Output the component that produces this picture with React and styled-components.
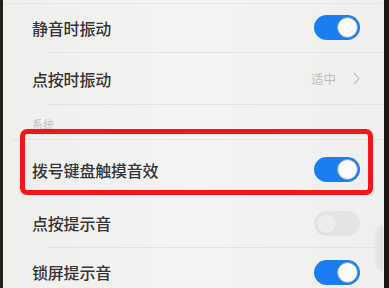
import React from 'react';
import styled, { createGlobalStyle } from 'styled-components';

const Global = createGlobalStyle`
  html, body {
    margin: 0;
    padding: 0;
    background: #1e1a17;
  }
  body {
    font-family: 'Noto Sans CJK SC', 'Noto Sans', sans-serif;
  }
`;

const Phone = styled.div`
  width: 389px;
  height: 288px;
  display: flex;
  overflow: hidden;
  background: #221d1a;
`;

const Bezel = styled.div`
  width: ${(p) => p.w}px;
  background: ${(p) => p.c};
`;

const Screen = styled.div`
  position: relative;
  flex: 1;
  background: linear-gradient(90deg, #efefee 0%, #f4f4f3 50%, #efefee 100%);
  padding-top: 3px;
`;

const TopLine = styled.div`
  position: absolute;
  left: 0;
  right: 0;
  top: 3px;
  height: 1px;
  background: #e6e6e5;
`;

const Row = styled.div`
  height: ${(p) => p.h}px;
  display: flex;
  align-items: center;
  justify-content: space-between;
  padding: 0 24px 0 29px;
`;

const Label = styled.span`
  font-size: 16px;
  font-weight: 500;
  color: #353535;
  letter-spacing: -0.2px;
`;

const Divider = styled.div`
  height: 1px;
  margin-left: ${(p) => (p.inset === undefined ? 44 : p.inset)}px;
  background: #e3e3e2;
`;

const Header = styled.div`
  height: 34px;
  display: flex;
  align-items: flex-end;
  padding: 0 0 7px 29px;
  box-sizing: border-box;
  font-size: 11px;
  color: #c2c2c2;
`;

const Toggle = styled.div`
  width: 46px;
  height: 25px;
  border-radius: 13px;
  background: ${(p) => (p.on ? '#1a7ef2' : '#e3e4e4')};
  display: flex;
  align-items: center;
  justify-content: ${(p) => (p.on ? 'flex-end' : 'flex-start')};
  padding: 0 2px;
  box-sizing: border-box;
`;

const Knob = styled.div`
  width: 21px;
  height: 21px;
  border-radius: 50%;
  box-sizing: border-box;
  background: ${(p) => (p.on ? '#fbfbfd' : '#eceded')};
  border: 1px solid ${(p) => (p.on ? '#8a9bb0' : '#dcdddd')};
`;

const Value = styled.div`
  display: flex;
  align-items: center;
  gap: 17px;
  font-size: 12.5px;
  color: #bdbdbd;
`;

const Highlight = styled.div`
  position: absolute;
  left: 17px;
  top: 129px;
  width: 353px;
  height: 66px;
  box-sizing: border-box;
  border: 5px solid #f6151b;
  border-radius: 7px;
`;

const EdgeBump = styled.div`
  position: absolute;
  right: 1px;
  top: 225px;
  width: 9px;
  height: 46px;
  border-radius: 10px 0 0 10px;
  background: linear-gradient(90deg, #ebebea, #dedede);
`;

const Switch = ({ on }) => (
  <Toggle on={on ? 1 : 0}>
    <Knob on={on ? 1 : 0} />
  </Toggle>
);

export default function App() {
  return (
    <>
      <Global />
      <Phone>
        <Bezel w={3} c="#241e1a" />
        <Screen>
          <TopLine />
          <Row h={49}>
            <Label>静音时振动</Label>
            <Switch on />
          </Row>
          <Divider />
          <Row h={51}>
            <Label>点按时振动</Label>
            <Value>
              适中
              <svg width="7" height="13" viewBox="0 0 7 13">
                <path d="M1 1l5 5.5L1 12" fill="none" stroke="#c4c4c4" strokeWidth="1.3" />
              </svg>
            </Value>
          </Row>
          <Divider />
          <Header>系统</Header>
          <Divider inset={8} />
          <Row h={59}>
            <Label>拨号键盘触摸音效</Label>
            <Switch on />
          </Row>
          <Row h={48}>
            <Label>点按提示音</Label>
            <Switch />
          </Row>
          <Divider />
          <Row h={48}>
            <Label>锁屏提示音</Label>
            <Switch on />
          </Row>
          <Highlight />
          <EdgeBump />
        </Screen>
        <Bezel w={5} c="#1c1816" />
      </Phone>
    </>
  );
}
